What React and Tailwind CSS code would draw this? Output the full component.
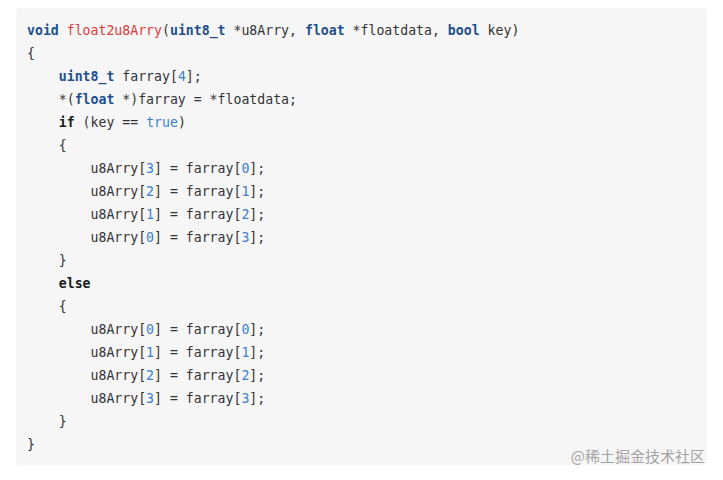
import React from 'react';

// token helpers
const K = ({ children }) => <span className="text-[#1d4f8c] font-semibold">{children}</span>;
const C = ({ children }) => <span className="text-[#1a1a1a] font-semibold">{children}</span>;
const F = ({ children }) => <span className="text-[#dd3a3a]">{children}</span>;
const N = ({ children }) => <span className="text-[#3a7fd2]">{children}</span>;

const assign = (a, b) => (
  <>
    {'        u8Arry['}<N>{a}</N>{'] = farray['}<N>{b}</N>{'];'}
  </>
);

const lines = [
  <>
    <K>void</K> <F>float2u8Arry</F>(<K>uint8_t</K> *u8Arry, <K>float</K> *floatdata, <K>bool</K> key)
  </>,
  '{',
  <>
    {'    '}<K>uint8_t</K> farray[<N>4</N>];
  </>,
  <>
    {'    *('}<K>float</K> *)farray = *floatdata;
  </>,
  <>
    {'    '}<C>if</C> (key == <N>true</N>)
  </>,
  '    {',
  assign(3, 0),
  assign(2, 1),
  assign(1, 2),
  assign(0, 3),
  '    }',
  <>
    {'    '}<C>else</C>
  </>,
  '    {',
  assign(0, 0),
  assign(1, 1),
  assign(2, 2),
  assign(3, 3),
  '    }',
  '}',
];

export default function App() {
  return (
    <div className="w-[723px] h-[480px] bg-white relative">
      <div className="pt-2 px-4">
        <div className="bg-[#f6f6f6] rounded-[4px] pl-[11px] pt-[11px] pb-[9px] h-[457px]">
          <pre
            className="m-0 text-[13.2px] leading-[23px] text-[#333]"
            style={{ fontFamily: '"DejaVu Sans Mono", "Liberation Mono", monospace' }}
          >
            {lines.map((l, i) => (
              <div key={i}>{l}</div>
            ))}
          </pre>
        </div>
      </div>

      {/* watermark */}
      <div
        className="absolute right-[18px] top-[446px] text-[15px] leading-[20px] text-[#a3a3a3]"
        style={{ fontFamily: '"Noto Sans CJK SC", "Noto Sans", sans-serif' }}
      >
        @稀土掘金技术社区
      </div>
    </div>
  );
}
